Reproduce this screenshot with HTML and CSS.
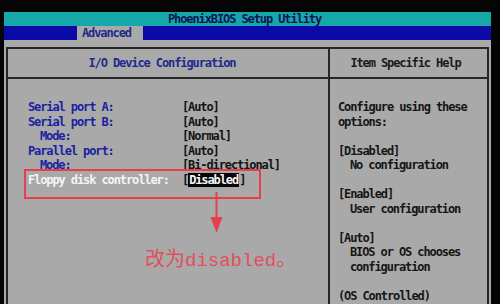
FILE: index.html
```html
<!DOCTYPE html>
<html lang="zh-CN">
<head>
    <meta charset="UTF-8">
    <meta name="viewport" content="width=device-width, initial-scale=1.0">
    <title>PhoenixBIOS Setup Utility</title>
    <link rel="stylesheet" href="styles.css">
</head>
<body>
    <div class="screen">
        <div class="titlebar">PhoenixBIOS Setup Utility</div>
        <div class="menubar"><span class="tab">Advanced</span></div>

        <div class="body">
            <div class="frame">
                <div class="col main">
                    <div class="head">I/O Device Configuration</div>
                    <div class="items">
                        <div class="item"><span class="label">Serial port A:</span><span class="value">[Auto]</span></div>
                        <div class="item"><span class="label">Serial port B:</span><span class="value">[Auto]</span></div>
                        <div class="item"><span class="label sub">Mode:</span><span class="value">[Normal]</span></div>
                        <div class="item"><span class="label">Parallel port:</span><span class="value">[Auto]</span></div>
                        <div class="item"><span class="label sub">Mode:</span><span class="value">[Bi-directional]</span></div>
                        <div class="item current"><span class="label">Floppy disk controller:</span><span class="value">[<span class="selected">Disabled</span>]</span></div>
                    </div>
                </div>
                <div class="col help">
                    <div class="head">Item Specific Help</div>
                    <div class="help-text">
                        <p>Configure using these<br>options:</p>
                        <p>[Disabled]<br><span class="ind">No configuration</span></p>
                        <p>[Enabled]<br><span class="ind">User configuration</span></p>
                        <p>[Auto]<br><span class="ind">BIOS or OS chooses</span><br><span class="ind">configuration</span></p>
                        <p>(OS Controlled)</p>
                    </div>
                </div>
            </div>

            <!-- annotation drawn over the screenshot -->
            <div class="mark-box"></div>
            <svg class="mark-arrow" width="13" height="41" viewBox="0 0 13 41">
                <line x1="6.5" y1="0" x2="6.5" y2="28" stroke="#e8404a" stroke-width="2"/>
                <polygon points="0.5,25 12.5,25 6.5,41" fill="#e8404a"/>
            </svg>
            <div class="mark-note">改为<span class="latin">disabled</span>。</div>
        </div>
    </div>
</body>
</html>
```

FILE: styles.css
```css
html, body {
    margin: 0;
    padding: 0;
}

body {
    background-color: #050505;
    width: 500px;
    height: 304px;
    overflow: hidden;
    font-family: "DejaVu Sans Mono", "Liberation Mono", monospace;
    font-size: 12px;
    font-weight: bold;
    letter-spacing: -1.1px;
}

.screen {
    margin-left: 4px;
    width: 487px;
    padding-top: 12px;
}

.titlebar {
    height: 14px;
    line-height: 14px;
    background-color: #16a8a8;
    color: #0c1458;
    text-align: center;
    padding-right: 6px;
}

.menubar {
    height: 14px;
    line-height: 14px;
    background-color: #0a0aa6;
    padding-left: 73px;
}

.tab {
    display: inline-block;
    width: 61px;
    padding-left: 5px;
    background-color: #a9a9a9;
    color: #1e2a8c;
}

.body {
    position: relative;
    height: 264px;
    overflow: hidden;
    background-color: #a9a9a9;
    padding-top: 7px;
    box-sizing: border-box;
}

.frame {
    display: grid;
    grid-template-columns: 320px 1fr;
    margin: 0 2px;
    height: 300px;
    border: 2px solid #262626;
    border-bottom: none;
}

.help {
    border-left: 2px solid #262626;
}

.head {
    height: 28px;
    line-height: 28px;
    text-align: center;
    border-bottom: 2px solid #262626;
}

.main .head {
    color: #1e2a8c;
    padding-right: 12px;
}

.help .head {
    color: #1a1a1a;
    padding-right: 6px;
}

.items {
    padding: 21px 0 0 20px;
    line-height: 14.5px;
}

.item {
    display: flex;
}

.label {
    width: 154px;
    color: #1a22a0;
}

.label.sub {
    width: 142px;
    padding-left: 12px;
}

.value {
    color: #141414;
}

.current .label {
    color: #f4f4f4;
}

.selected {
    background-color: #050505;
    color: #f4f4f4;
    padding: 0 1px;
}

.help-text {
    padding: 21px 0 0 8px;
    line-height: 14.5px;
    color: #161616;
}

.help-text p {
    margin: 0 0 14.5px;
}

.ind {
    padding-left: 12px;
}

.mark-box {
    position: absolute;
    left: 20px;
    top: 129px;
    width: 233px;
    height: 26px;
    border: 2px solid #e8404a;
}

.mark-arrow {
    position: absolute;
    left: 206px;
    top: 152px;
}

.mark-note {
    position: absolute;
    left: 141px;
    top: 206px;
    line-height: 24px;
    font-family: "Noto Sans CJK SC", serif;
    font-size: 20px;
    font-weight: normal;
    letter-spacing: 0;
    color: #e0505c;
}

.mark-note .latin {
    font-family: "Liberation Mono", monospace;
    font-size: 19px;
    letter-spacing: 0;
}
```
